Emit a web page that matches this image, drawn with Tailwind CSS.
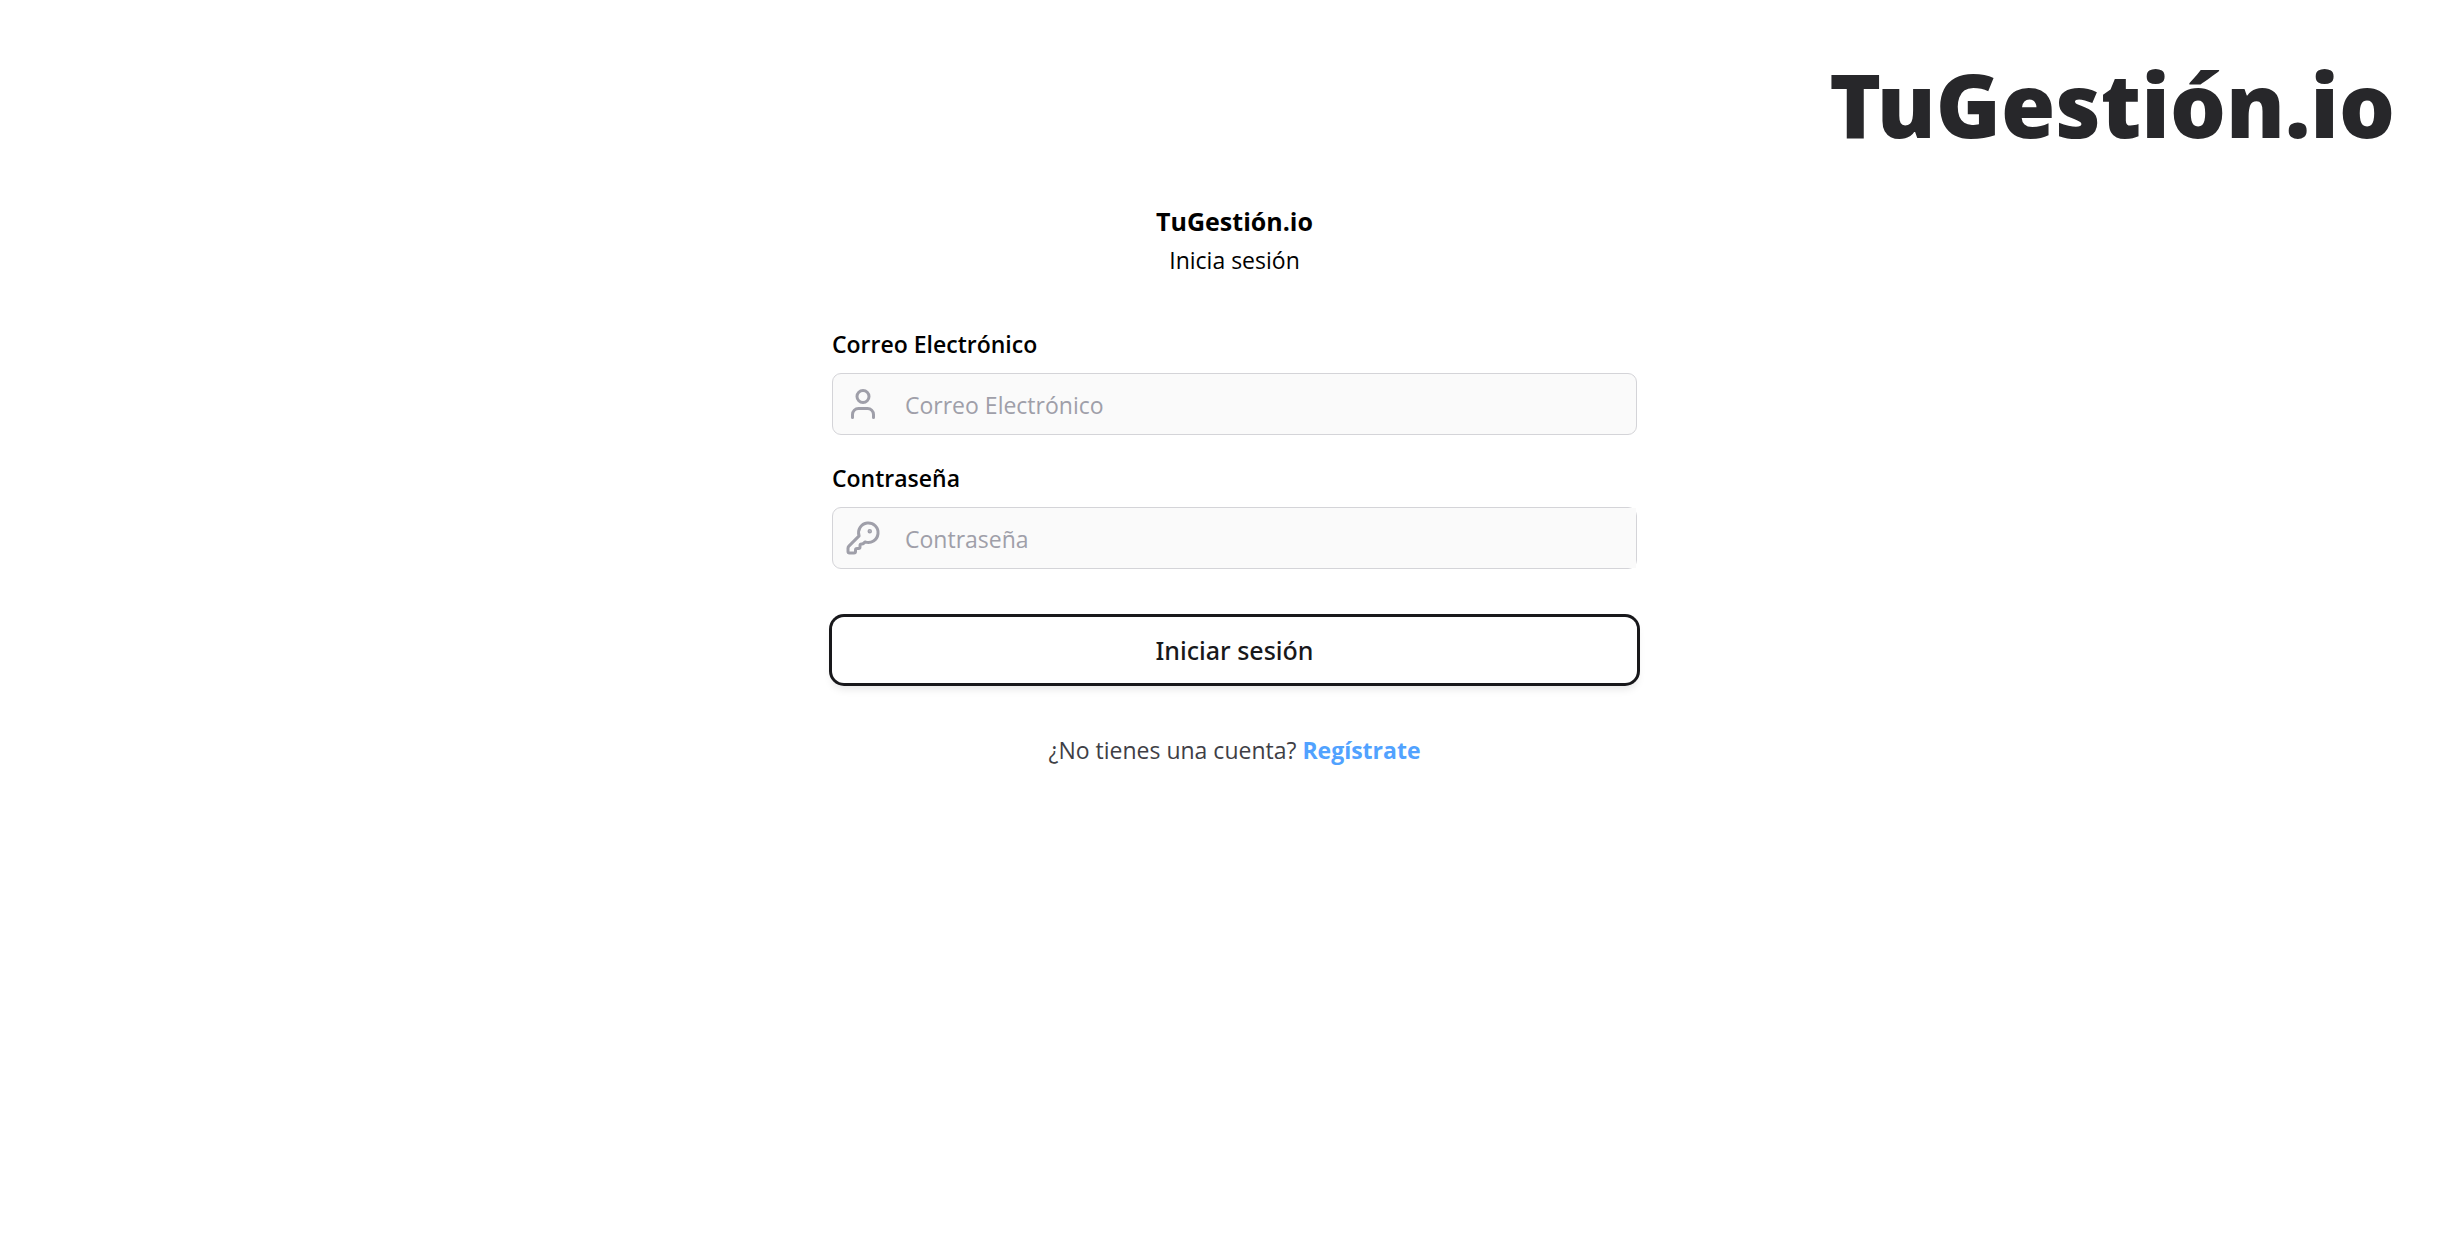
<!DOCTYPE html>
<html lang="es">
<head>
<meta charset="utf-8">
<title>TuGestión.io</title>
<script src="https://cdn.jsdelivr.net/npm/@tailwindcss/browser@4"></script>
</head>
<body class="min-h-screen bg-white pl-[6px] text-2xl text-black font-['Segoe_UI','Open_Sans',sans-serif]">
<header class="flex justify-end pt-[49px] pr-[68px]">
  <div class="font-['Segoe_UI','Noto_Sans',sans-serif] text-[88px] leading-[110px] font-black text-[#27272a]">TuGestión.io</div>
</header>
<main class="mx-auto w-full max-w-[805px]">
  <div class="pt-[41px] text-center">
    <h1 class="text-[25px] leading-[42px] font-bold">TuGestión.io</h1>
    <p class="text-[23px] leading-[36px]">Inicia sesión</p>
  </div>
  <form class="mt-[48px]">
    <label for="email" class="block text-[23px] leading-[36px] font-semibold">Correo Electrónico</label>
    <div class="mt-[11px] flex h-[62px] items-center rounded-[9px] border border-[#d4d4d8] bg-[#fafafa] pl-[12px]">
      <svg class="size-[36px] shrink-0 text-[#9f9fa9]" viewBox="0 0 24 24" fill="none" stroke="currentColor" stroke-width="2" stroke-linecap="round" stroke-linejoin="round" aria-hidden="true"><path d="M19 21v-2a4 4 0 0 0-4-4H9a4 4 0 0 0-4 4v2"/><circle cx="12" cy="7" r="4"/></svg>
      <input id="email" type="email" placeholder="Correo Electrónico" class="h-full min-w-0 grow rounded-r-[8px] pt-[2px] pl-[24px] text-[23px] outline-none placeholder:text-[#9f9fa9]">
    </div>
    <label for="password" class="mt-[25px] block text-[23px] leading-[36px] font-semibold">Contraseña</label>
    <div class="mt-[11px] flex h-[62px] items-center rounded-[9px] border border-[#d4d4d8] bg-[#fafafa] pl-[12px]">
      <svg class="size-[36px] shrink-0 text-[#9f9fa9]" viewBox="0 0 24 24" fill="none" stroke="currentColor" stroke-width="2" stroke-linecap="round" stroke-linejoin="round" aria-hidden="true"><path d="M2.586 17.414A2 2 0 0 0 2 18.828V21a1 1 0 0 0 1 1h3a1 1 0 0 0 1-1v-1a1 1 0 0 1 1-1h1a1 1 0 0 0 1-1v-1a1 1 0 0 1 1-1h.172a2 2 0 0 0 1.414-.586l.814-.814a6.5 6.5 0 1 0-4-4z"/><circle cx="16.5" cy="7.5" r=".5" fill="currentColor"/></svg>
      <input id="password" type="password" placeholder="Contraseña" class="h-full min-w-0 grow bg-[#fafafa] pt-[2px] pl-[24px] text-[23px] outline-none placeholder:text-[#9f9fa9]">
    </div>
    <button type="submit" class="mt-[48px] block h-[66px] w-full rounded-[12px] bg-white pt-[2px] font-['Segoe_UI','Noto_Sans',sans-serif] text-[25px] font-medium text-[#18181b] shadow-[0_6px_9px_rgba(0,0,0,0.1)] ring-3 ring-[#18181b]">Iniciar sesión</button>
  </form>
  <p class="mt-[49px] text-center text-[23px] leading-[36px] text-[#3f3f46]">¿No tienes una cuenta? <a href="#" class="font-bold text-[#51a2ff]">Regístrate</a></p>
</main>
</body>
</html>
